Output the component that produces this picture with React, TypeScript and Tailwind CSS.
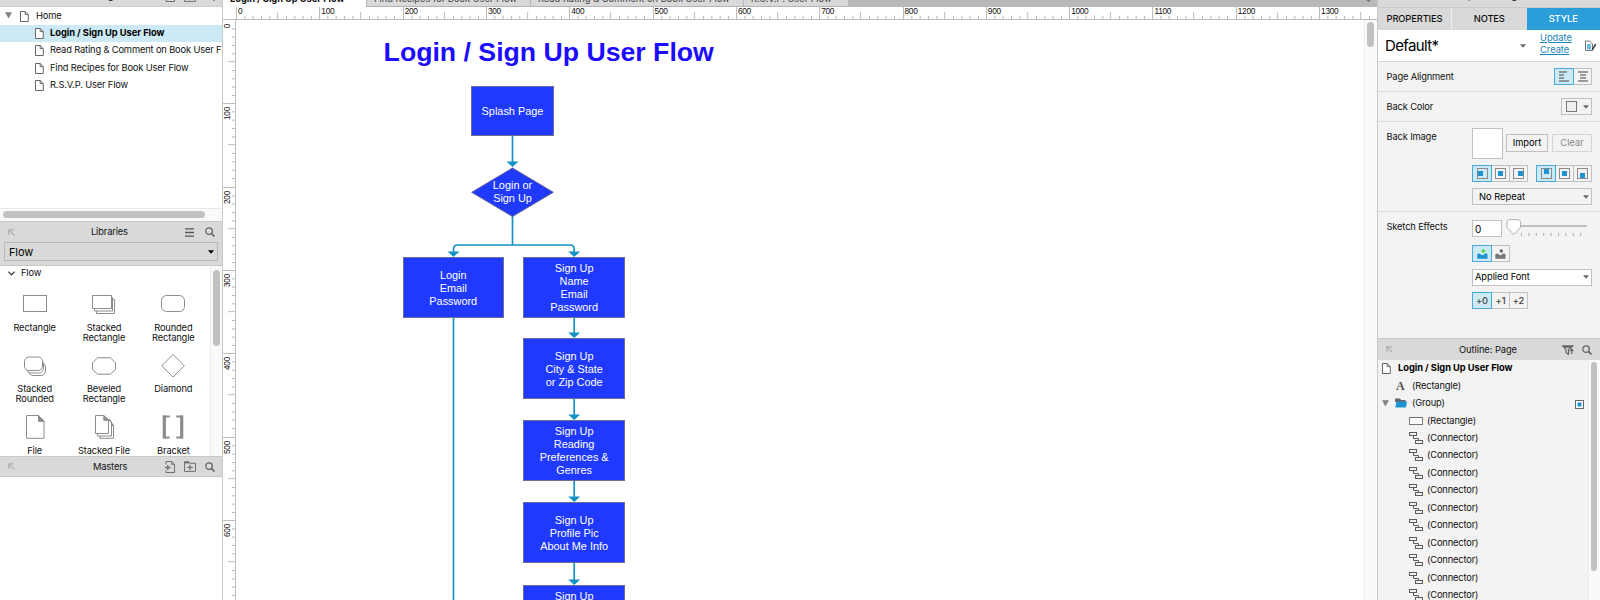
import React from "react";

type Kids = { children?: React.ReactNode };

function PageIcon() {
  return (
    <svg width="9" height="11" viewBox="0 0 9 11" fill="white" stroke="#666" strokeWidth="1" className="shrink-0">
      <path d="M.5.5h4.7l3.1 3.1v6.9H.5z" />
      <path d="M5.2.5v3.1h3.1" fill="none" />
    </svg>
  );
}

function SearchIcon() {
  return (
    <svg width="10" height="10" viewBox="0 0 10 10" fill="none" stroke="#666" strokeWidth="1.3" className="shrink-0">
      <circle cx="4.1" cy="4.1" r="3.3" />
      <path d="M6.5 6.5l3 3" strokeWidth="1.7" />
    </svg>
  );
}

function CornerArrow() {
  return (
    <svg width="7" height="7" viewBox="0 0 7 7" fill="none" stroke="#b0b0b0" strokeWidth="1.3" className="shrink-0">
      <path d="M.8 6V.8H6M1 1l5.5 5.5" />
    </svg>
  );
}

function AddPageIcon() {
  return (
    <svg width="10" height="12" viewBox="0 0 10 12" fill="none" stroke="#707070" strokeWidth="1">
      <path d="M1 3.5V.5h5.7l2.8 2.8v8.2H1V9.3M6.7.5v2.8h2.8" />
      <path d="M0 6.5h5.6M2.8 3.9v5.2" strokeWidth="1.3" />
    </svg>
  );
}

function AddFolderIcon() {
  return (
    <svg width="12" height="11" viewBox="0 0 12 11" fill="none" stroke="#707070" strokeWidth="1">
      <path d="M.5 10.4V.7h4.3l1 1.6h5.7v8.1z" />
      <path d="M.5 1.6h4.8" strokeWidth="1.6" />
      <path d="M3.3 6.4h5.4M6 3.8v5.2" strokeWidth="1.3" />
    </svg>
  );
}

function Caret({ dark = false }: { dark?: boolean }) {
  return (
    <svg width="6" height="4" viewBox="0 0 6 4" fill={dark ? "#000" : "#666"} className="shrink-0">
      <path d="M0 .3h6L3 3.8z" />
    </svg>
  );
}

function Disclosure() {
  return (
    <svg width="7" height="7" viewBox="0 0 7 7" fill="#808080" className="shrink-0">
      <path d="M0 .3h7L3.5 6.5z" />
    </svg>
  );
}

const sitePages = [
  "Read Rating & Comment on Book User Flow",
  "Find Recipes for Book User Flow",
  "R.S.V.P. User Flow",
];

function PagesPanel() {
  return (
    <section className="h-[221px] shrink-0 flex flex-col overflow-hidden">
      <div className="-mt-[14px] h-[21px] shrink-0 bg-[#d9d9d9] border-b border-[#cfcfcf] flex items-center pr-[7px]">
        <span className="flex-1 pl-[97px]">Pages</span>
        <div className="flex items-center gap-[9px]">
          <AddPageIcon />
          <AddFolderIcon />
          <SearchIcon />
        </div>
      </div>
      <div className="h-[18px] shrink-0 flex items-center pl-[5px] pb-[1px]">
        <Disclosure />
        <span className="ml-2 flex pt-[1px]"><PageIcon /></span>
        <span className="ml-[7px]">Home</span>
      </div>
      <div className="h-[17px] shrink-0 flex items-center pl-[35px] bg-[#cceaf6]">
        <PageIcon />
        <span className="ml-[6px] -mt-[2px] font-bold tracking-[-0.04px] text-black">Login / Sign Up User Flow</span>
      </div>
      {sitePages.map((name) => (
        <div key={name} className="h-[17.5px] shrink-0 flex items-center pl-[35px] whitespace-nowrap overflow-hidden">
          <PageIcon />
          <span className="ml-[6px] -mt-[1.5px]">{name}</span>
        </div>
      ))}
      <div className="mt-auto h-[13px] shrink-0 border-t border-[#e8e8e8] bg-[#fafafa] pl-[3px] pt-[2px]">
        <div className="h-[7px] w-[202px] rounded-full bg-[#c1c1c1]" />
      </div>
    </section>
  );
}

const outline = { fill: "white", stroke: "#8c8c8c", strokeWidth: 1 };

const shapes: { name: string[]; art: React.ReactNode }[] = [
  { name: ["Rectangle"], art: <rect x="3.5" y="4.5" width="23" height="16" /> },
  {
    name: ["Stacked", "Rectangle"],
    art: (
      <>
        <path d="M7.5 8.5h18v14h-18z" />
        <path d="M5.5 6.5h18v13.5h-18z" />
        <path d="M3.5 4.5h19v13h-19z" />
      </>
    ),
  },
  { name: ["Rounded", "Rectangle"], art: <rect x="3.5" y="4.5" width="23" height="16" rx="5" /> },
  {
    name: ["Stacked", "Rounded"],
    art: (
      <>
        <rect x="8.5" y="9.5" width="17" height="13" rx="4.5" />
        <rect x="6.5" y="6.5" width="17" height="13.5" rx="4.5" />
        <rect x="4.5" y="4" width="18" height="13.5" rx="4.5" />
      </>
    ),
  },
  { name: ["Beveled", "Rectangle"], art: <path d="M8.5 4.8h13l5 5v6.4l-5 5h-13l-5-5V9.8z" /> },
  { name: ["Diamond"], art: <path d="M15 1.5L26.3 12.8 15 24 3.7 12.8z" /> },
  {
    name: ["File"],
    art: (
      <>
        <path d="M6.5 1.5h12l5.5 5.8v17H6.5z" />
        <path d="M18.5 1.5v5.8H24z" fill="#8c8c8c" />
      </>
    ),
  },
  {
    name: ["Stacked File"],
    art: (
      <>
        <path d="M11 7.5h9.5l4 4v12.8H11z" />
        <path d="M8.5 4.5h10l4 4v13.5h-14z" />
        <path d="M6.5 1.5h8.3l4.7 4.8v13.2h-13z" />
        <path d="M14.8 1.5v4.8h4.7zM20 5l4.5 6.5h-2V8z" fill="#8c8c8c" />
      </>
    ),
  },
  {
    name: ["Bracket"],
    art: (
      <g fill="none">
        <path d="M6.3 1.5v23M23.7 1.5v23" strokeWidth="3.2" />
        <path d="M5 2.500h6.700M5 23.500h6.700M18.300 2.500H25M18.300 23.500H25" strokeWidth="2" />
      </g>
    ),
  },
];

function LibrariesPanel() {
  return (
    <section className="h-[235px] shrink-0 flex flex-col">
      <header className="h-[45px] shrink-0 bg-[#d9d9d9] border-t border-b border-[#c8c8c8] px-1">
        <div className="h-[20px] flex items-center pl-1 pr-[3px]">
          <CornerArrow />
          <span className="flex-1 pl-[76px]">Libraries</span>
          <svg width="9" height="9" viewBox="0 0 9 9" stroke="#555" strokeWidth="1.3" className="mr-[11px]">
            <path d="M0 .9h9M0 4.500h9M0 8.100h9" />
          </svg>
          <SearchIcon />
        </div>
        <div className="h-[19px] border border-[#b8b8b8] flex items-center justify-between pl-1 pr-[3px] text-[11px] text-black">
          Flow
          <Caret dark />
        </div>
      </header>
      <div className="flex-1 flex min-h-0 overflow-hidden">
        <div className="w-[210px] shrink-0">
          <div className="h-[14px] flex items-center pl-2">
            <svg width="7" height="5" viewBox="0 0 7 5" fill="none" stroke="#444" strokeWidth="1.3">
              <path d="M.3.6l3.2 3.200L6.700.6" />
            </svg>
            <span className="ml-[6px]">Flow</span>
          </div>
          <div className="w-[208px] grid grid-cols-3 auto-rows-[61.6px] pt-[11px]">
            {shapes.map((s) => (
              <div key={s.name.join(" ")} className="flex flex-col items-center text-center leading-[10px]">
                <svg width="30" height="26" viewBox="0 0 30 26" {...outline} className="shrink-0 mb-[5.5px]">
                  {s.art}
                </svg>
                {s.name.map((line) => (
                  <span key={line} className="whitespace-nowrap">{line}</span>
                ))}
              </div>
            ))}
          </div>
        </div>
        <div className="flex-1 border-l border-[#ececec] bg-[#fafafa] pl-[2px] pt-1">
          <div className="w-[7px] h-[76px] rounded-full bg-[#c1c1c1]" />
        </div>
      </div>
    </section>
  );
}

function MastersPanel() {
  return (
    <section className="flex-1 min-h-0">
      <header className="h-[21px] bg-[#d9d9d9] border-t border-b border-[#c8c8c8] flex items-center pl-2 pr-[7px]">
        <CornerArrow />
        <span className="flex-1 pl-[78px]">Masters</span>
        <div className="flex items-center gap-[9px]">
          <AddPageIcon />
          <AddFolderIcon />
          <SearchIcon />
        </div>
      </header>
    </section>
  );
}

const STEP = 83.32;
const minor = [1, 2, 3, 4, 6, 7, 8, 9];

function HorizontalRuler() {
  return (
    <div className="h-[13px] shrink-0 flex overflow-hidden bg-white border-b border-[#bdbdbd] pl-[13px]">
      {Array.from({ length: 14 }, (_, i) => (
        <div key={i} className="w-[83.32px] h-[12px] shrink-0 grid">
          <svg width={STEP} height="12" className="col-start-1 row-start-1" stroke="#bdbdbd" strokeWidth="1">
            <path d={`M.5 0v12M${STEP / 2} 5v7`} />
            {minor.map((m) => (
              <path key={m} d={`M${0.5 + (m * STEP) / 10} 9v3`} />
            ))}
          </svg>
          <span className="col-start-1 row-start-1 pl-[2px] font-['Liberation_Sans',sans-serif] text-[8.3px] leading-[9px] tracking-[-0.3px]">
            {i * 100}
          </span>
        </div>
      ))}
    </div>
  );
}

function VerticalRuler() {
  return (
    <div className="w-[13px] shrink-0 overflow-hidden bg-white border-r border-[#bdbdbd] flex flex-col">
      {Array.from({ length: 7 }, (_, i) => (
        <div key={i} className="h-[83.32px] w-[12px] shrink-0 grid">
          <svg width="12" height={STEP} className="col-start-1 row-start-1" stroke="#bdbdbd" strokeWidth="1">
            <path d={`M${i ? 0 : 12} .5h12M5 ${STEP / 2}h7`} />
            {minor.map((m) => (
              <path key={m} d={`M9 ${0.5 + (m * STEP) / 10}h3`} />
            ))}
          </svg>
          <span className="col-start-1 row-start-1 self-start w-[9px] font-['Liberation_Sans',sans-serif] text-[8.3px] leading-[9px] tracking-[-0.3px] [writing-mode:vertical-rl] rotate-180 pb-[4px]">
            {i * 100}
          </span>
        </div>
      ))}
    </div>
  );
}

const steps = [
  { box: "left-[166.5px] top-[237px] w-[101.5px] h-[61px]", lines: ["Login", "Email", "Password"] },
  { box: "left-[287.3px] top-[237px] w-[101.7px] h-[61px]", lines: ["Sign Up", "Name", "Email", "Password"] },
  { box: "left-[287.3px] top-[318px] w-[101.7px] h-[61px]", lines: ["Sign Up", "City & State", "or Zip Code"] },
  { box: "left-[287.3px] top-[400px] w-[101.7px] h-[61px]", lines: ["Sign Up", "Reading", "Preferences &", "Genres"] },
  { box: "left-[287.3px] top-[482px] w-[101.7px] h-[61px]", lines: ["Sign Up", "Profile Pic", "About Me Info"] },
  { box: "left-[287.3px] top-[565px] w-[101.7px] h-[61px]", lines: ["Sign Up", "Interests", "Notifications", "Finish"] },
  { box: "left-[235px] top-[65.5px] w-[83px] h-[50px]", lines: ["Splash Page"] },
];

const arrowTips = [
  [276.5, 147],
  [217.5, 237],
  [338.2, 237],
  [338.2, 318],
  [338.2, 400],
  [338.2, 482],
  [338.2, 565],
];

function Canvas() {
  return (
    <div className="relative flex-1 h-full overflow-hidden bg-white font-['Liberation_Sans',sans-serif] tracking-normal">
      <svg width="1128" height="580" className="absolute left-0 top-0" fill="none" stroke="#1492c6" strokeWidth="1.7">
        <path d="M276.5 115v28M276.5 196v29M217.5 233v-4q0-4 4-4h112.7q4 0 4 4v4M217.5 298v282" />
        <path d="M338.2 298v16M338.2 379v16M338.2 461v16M338.2 543v17" />
        {arrowTips.map(([x, y]) => (
          <path key={`${x}-${y}`} d={`M${x - 6} ${y - 5.6}h12l-6 5.600z`} fill="#1492c6" stroke="none" />
        ))}
        <path d="M276.5 148l40.8 24.300-40.800 24.200L235.700 172.300z" fill="#2039ff" stroke="#62629a" strokeWidth="1" />
      </svg>
      <h1 className="absolute left-[147.6px] top-[16px] whitespace-nowrap text-[26.67px] leading-[32px] font-bold text-[#1c0cff]">
        Login / Sign Up User Flow
      </h1>
      {steps.map((s) => (
        <div
          key={s.box}
          className={`absolute flex flex-col items-center justify-center border border-[#6c6c94] bg-[#2039ff] text-white text-[10.9px] leading-[13px] pt-[1px] ${s.box}`}
        >
          {s.lines.map((l) => (
            <span key={l} className="whitespace-nowrap">{l}</span>
          ))}
        </div>
      ))}
      <div className="absolute left-[236px] top-[159px] w-[81px] text-center text-white text-[10.9px] leading-[13px]">
        Login or
        <br />
        Sign Up
      </div>
    </div>
  );
}

function DocTabs() {
  return (
    <div className="h-[7px] shrink-0 bg-[#b8b8b8] flex items-end overflow-hidden whitespace-nowrap leading-[14px] text-[#444]">
      <div className="w-[143px] h-[21px] shrink-0 bg-white pl-[7px] pt-[6px] font-bold tracking-[-0.04px] text-[#111]">Login / Sign Up User Flow</div>
      <div className="w-[165px] h-[21px] shrink-0 bg-[#d9d9d9] border-x border-b border-[#b4b4b4] pl-[7px] pt-[6px] tracking-normal">Find Recipes for Book User Flow</div>
      <div className="w-[213px] h-[21px] shrink-0 bg-[#d9d9d9] border-r border-b border-[#b4b4b4] pl-[7px] pt-[6px] tracking-normal">Read Rating & Comment on Book User Flow</div>
      <div className="w-[104px] h-[21px] shrink-0 bg-[#d9d9d9] border-b border-[#b4b4b4] pl-[7px] pt-[6px] tracking-normal">R.S.V.P. User Flow</div>
      <div className="h-[7px] flex-1 flex justify-end pr-[6px]">
        <svg width="5" height="3" viewBox="0 0 5 3" fill="#777">
          <path d="M0 0h5L2.500 2z" />
        </svg>
      </div>
    </div>
  );
}

function Row({ label, cls, children }: Kids & { label: string; cls: string }) {
  return (
    <div className={`shrink-0 flex pl-[8.5px] pr-2 ${cls}`}>
      <span className="w-[85.5px] shrink-0 whitespace-nowrap leading-[14px]">{label}</span>
      <div className="flex-1 min-w-0">{children}</div>
    </div>
  );
}

function Segments({ items }: { items: React.ReactNode[] }) {
  return (
    <div className="flex h-[17px]">
      {items.map((item, i) => (
        <div
          key={i}
          className={`flex items-center justify-center border ${
            i === 0 ? "w-[20px] border-[#4aa9dc] bg-[#cceaf6]" : "w-[18px] border-l-0 border-[#c0c0c0]"
          }`}
        >
          {item}
        </div>
      ))}
    </div>
  );
}

function Spot({ x, y }: { x: number; y: number }) {
  return (
    <svg width="11" height="11" viewBox="0 0 11 11">
      <rect x=".5" y=".5" width="10" height="10" fill="none" stroke="#8a8a8a" />
      <rect x={x} y={y} width="5" height="5" fill="#1d93d2" />
    </svg>
  );
}

function Lines({ centered = false }: { centered?: boolean }) {
  return (
    <svg width="10" height="11" viewBox="0 0 10 11" stroke="#444" strokeWidth="1.2">
      <path d={centered ? "M0 1h10M2 4h6M2 7h6M0 10h10" : "M0 1h8M0 4h5M0 7h5M0 10h10"} />
    </svg>
  );
}

function Picture({ sky, land }: { sky: string; land: string }) {
  return (
    <svg width="11" height="10" viewBox="0 0 11 10">
      <circle cx="6.3" cy="2" r="1.7" fill={sky} />
      <path d="M.3 9.700V5.300q1.800-1.800 3.400 0t3 .5q1.500-2.200 3.800-.8v4.700z" fill={land} />
    </svg>
  );
}

function ConnectorIcon() {
  return (
    <svg width="14" height="13" viewBox="0 0 14 13" fill="none" stroke="#5c5c5c" strokeWidth="1" className="shrink-0">
      <rect x=".5" y=".5" width="7" height="3" />
      <rect x="6.5" y="8.500" width="7" height="3" />
      <path d="M4.500 3.500v3h5v2" />
    </svg>
  );
}

function Inspector() {
  return (
    <section className="h-[338px] shrink-0 flex flex-col overflow-hidden bg-[#f3f3f3]">
      <div className="-mt-[14px] h-[22px] shrink-0 bg-[#d9d9d9] border-b border-[#c8c8c8] flex justify-center items-center pb-[1px]">
        Inspector: Page
      </div>
      <div className="h-[22px] shrink-0 grid grid-cols-[74px_74.5px_73.5px] text-center leading-[22px] bg-[#d9d9d9] font-medium tracking-[-0.1px]">
        <span className="border-r border-[#f0f0f0]">PROPERTIES</span>
        <span>NOTES</span>
        <span className="bg-[#2b9dd9] text-white">STYLE</span>
      </div>
      <div className="h-[32px] shrink-0 bg-white border-b border-[#d9d9d9] flex items-center pl-[7px]">
        <span className="w-[135px] text-[15px] tracking-[-0.65px] text-black">Default*</span>
        <Caret />
        <div className="ml-[14px] -mt-[3px] w-[45px] leading-[12.3px] tracking-normal text-[#1c84b8] underline">
          <div>Update</div>
          <div>Create</div>
        </div>
        <svg width="12" height="12" viewBox="0 0 12 12" fill="none" stroke="#777" className="shrink-0">
          <path d="M.5 1h4l3 3v6.500h-7z" />
          <path d="M2 4h4v5.500H2z" fill="#66bde6" stroke="none" />
          <path d="M10.800 4l-3.600 6" stroke="#444" strokeWidth="1.5" />
        </svg>
      </div>
      <Row label="Page Alignment" cls="h-[30px] pt-[6px] border-b border-[#d9d9d9] [&>span]:pt-[2px]">
        <div className="flex justify-end">
          <Segments items={[<Lines />, <Lines centered />]} />
        </div>
      </Row>
      <Row label="Back Color" cls="h-[30px] pt-[6px] border-b border-[#d9d9d9] [&>span]:pt-[2px]">
        <div className="ml-auto w-[31px] h-[17px] border border-[#c0c0c0] flex items-center justify-between pl-1 pr-[2px]">
          <div className="size-[11px] border border-[#777] bg-[#eee]" />
          <Caret />
        </div>
      </Row>
      <Row label="Back Image" cls="h-[90px] pt-[6px] border-b border-[#d9d9d9] [&>span]:pt-[2px]">
        <div className="flex items-center text-center leading-[16px] tracking-normal">
          <div className="size-[31px] bg-white border border-[#c0c0c0]" />
          <div className="ml-[3px] -mt-[1px] w-[42px] h-[18px] border border-[#c0c0c0] text-black">Import</div>
          <div className="ml-[4px] -mt-[1px] w-[40px] h-[18px] border border-[#d4d4d4] text-[#8c8c8c]">Clear</div>
        </div>
        <div className="mt-[6px] flex justify-between">
          <Segments items={[<Spot x={1} y={3} />, <Spot x={3} y={3} />, <Spot x={5} y={3} />]} />
          <Segments items={[<Spot x={3} y={1} />, <Spot x={3} y={3} />, <Spot x={3} y={5} />]} />
        </div>
        <div className="mt-[6px] h-[17px] border border-[#c0c0c0] flex items-center justify-between pl-[6px] pr-[2px] tracking-normal text-black">
          No Repeat
          <Caret />
        </div>
      </Row>
      <Row label="Sketch Effects" cls="pt-[8px]">
        <div className="flex">
          <div className="w-[30px] h-[17px] bg-white border border-[#c0c0c0] pl-[2px] leading-[17px] text-black text-[10px]">0</div>
          <svg width="84" height="19" viewBox="0 0 84 19" className="ml-[4px] -mt-[1px] -mr-1">
            <path d="M14 7h67" stroke="#c0c0c0" strokeWidth="2" />
            <path
              d="M15.500 14v3M22.900 14v3M30.300 14v3M37.700 14v3M45.100 14v3M52.500 14v3M59.900 14v3M67.300 14v3M74.700 14v3"
              stroke="#aaa"
            />
            <path d="M3.500.7h8.500q2.500 0 2.500 2.500v5.300L7.800 15.500 1 8.500V3.200Q1 .7 3.500.7z" fill="white" stroke="#b0b0b0" />
          </svg>
        </div>
        <div className="mt-[7px]">
          <Segments items={[<Picture sky="#4bd62c" land="#1d93d2" />, <Picture sky="#666" land="#777" />]} />
        </div>
        <div className="mt-[6.5px] h-[17px] bg-white border border-[#c0c0c0] flex items-center justify-between pl-[2px] pr-[2px] tracking-[-0.05px] text-black">
          Applied Font
          <Caret />
        </div>
        <div className="mt-[6.5px] font-medium text-[#444]">
          <Segments items={["+0", "+1", "+2"]} />
        </div>
      </Row>
    </section>
  );
}

function OutlinePanel() {
  return (
    <section className="flex-1 min-h-0 flex flex-col bg-[#f3f3f3]">
      <header className="h-[22px] shrink-0 bg-[#d9d9d9] border-t border-[#c8c8c8] flex items-center pl-2 pr-2">
        <CornerArrow />
        <span className="flex-1 pl-[66px] tracking-[-0.05px]">Outline: Page</span>
        <svg width="12" height="10" viewBox="0 0 12 10" fill="none" stroke="#666" strokeWidth="1.2" className="mr-[8px]">
          <path d="M0 .8h11L6.500 4.500V9.500L4 7.500v-3L.8 1.200M2 2.200h7M9.700 9V4.500M8 6l1.700-1.800L11.400 6" />
        </svg>
        <SearchIcon />
      </header>
      <div className="flex-1 min-h-0 flex overflow-hidden">
        <div className="flex-1 [&>div]:h-[17.5px] [&>div]:flex [&>div]:items-center [&>div]:shrink-0 -mt-[0.5px]">
          <div className="pl-[4px]">
            <PageIcon />
            <span className="ml-[7px] -mt-px font-bold tracking-[-0.04px] text-black">Login / Sign Up User Flow</span>
          </div>
          <div className="pl-[18px]">
            <span className="w-[16px] font-['Liberation_Serif',serif] font-bold text-[12px] text-[#555]">A</span>
            (Rectangle)
          </div>
          <div className="pl-[4px] pr-[4px]">
            <Disclosure />
            <svg width="12" height="10" viewBox="0 0 12 10" className="ml-[6px]">
              <path d="M0 9V.5h5l1 1.500h4.500V4H0z" fill="#666" />
              <path d="M1.500 3.500H12L11 9.500H.3z" fill="#1d93d2" />
            </svg>
            <span className="ml-[5px] flex-1">(Group)</span>
            <svg width="9" height="9" viewBox="0 0 9 9" className="mt-[3px]">
              <rect x=".5" y=".5" width="8" height="8" fill="white" stroke="#666" />
              <rect x="2.5" y="2.5" width="4" height="4" fill="#1d93d2" />
            </svg>
          </div>
          <div className="pl-[31px]">
            <svg width="14" height="8" viewBox="0 0 14 8">
              <rect x=".5" y=".5" width="13" height="7" fill="white" stroke="#777" />
            </svg>
            <span className="ml-[4px]">(Rectangle)</span>
          </div>
          {Array.from({ length: 10 }, (_, i) => (
            <div key={i} className="pl-[31px]">
              <ConnectorIcon />
              <span className="ml-[4px] -mt-px">(Connector)</span>
            </div>
          ))}
        </div>
        <div className="w-[12px] shrink-0 bg-[#fafafa] border-l border-[#ececec] pl-[2px] pt-[2px]">
          <div className="w-[6px] h-[209px] rounded-full bg-[#c1c1c1]" />
        </div>
      </div>
    </section>
  );
}

export default function App() {
  return (
    <div className="w-[1600px] h-[600px] overflow-hidden flex bg-white font-['Inter',sans-serif] text-[9.3px] leading-[12px] tracking-[-0.14px] text-[#111]">
      <aside className="w-[223px] shrink-0 flex flex-col overflow-hidden border-r border-[#c8c8c8]">
        <PagesPanel />
        <LibrariesPanel />
        <MastersPanel />
      </aside>
      <main className="w-[1154px] shrink-0 flex flex-col overflow-hidden">
        <DocTabs />
        <HorizontalRuler />
        <div className="flex-1 min-h-0 flex">
          <VerticalRuler />
          <Canvas />
          <div className="w-[13px] shrink-0 bg-[#fafafa] border-l border-[#ececec] pl-[2px] pt-[2px]">
            <div className="w-[7px] h-[25px] rounded-full bg-[#c1c1c1]" />
          </div>
        </div>
      </main>
      <aside className="w-[223px] shrink-0 flex flex-col overflow-hidden border-l border-[#c8c8c8]">
        <Inspector />
        <OutlinePanel />
      </aside>
    </div>
  );
}
